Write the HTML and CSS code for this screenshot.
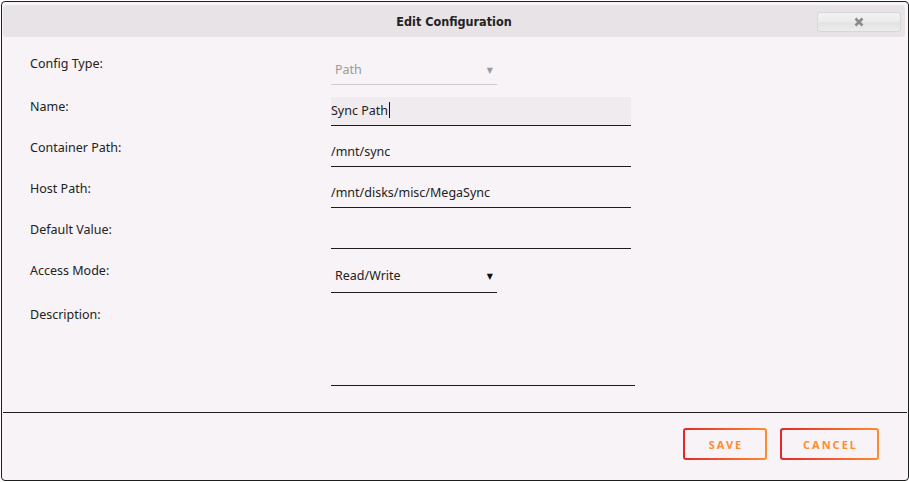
FILE: index.html
```html
<!DOCTYPE html>
<html lang="en">
<head>
    <meta charset="UTF-8">
    <meta name="viewport" content="width=device-width, initial-scale=1.0">
    <title>Edit Configuration</title>
    <link rel="stylesheet" href="styles.css">
</head>
<body>
    <div class="dialog">
        <header class="titlebar">
            <span></span>
            <h1 class="title">Edit Configuration</h1>
            <button type="button" class="close-button" aria-label="Close">
                <svg viewBox="0 0 10 10" xmlns="http://www.w3.org/2000/svg">
                    <path d="M1.5 1.5l7 7M8.5 1.5l-7 7"/>
                </svg>
            </button>
        </header>
        <form class="config-form">
            <div class="row">
                <label>Config Type:</label>
                <div class="select select-disabled">
                    <span>Path</span>
                    <span class="arrow">&#9660;</span>
                </div>
            </div>
            <div class="row">
                <label>Name:</label>
                <div class="field field-active">Sync Path<span class="caret"></span></div>
            </div>
            <div class="row">
                <label>Container Path:</label>
                <div class="field">/mnt/sync</div>
            </div>
            <div class="row">
                <label>Host Path:</label>
                <div class="field">/mnt/disks/misc/MegaSync</div>
            </div>
            <div class="row">
                <label>Default Value:</label>
                <div class="field"></div>
            </div>
            <div class="row">
                <label>Access Mode:</label>
                <div class="select select-tall">
                    <span>Read/Write</span>
                    <span class="arrow">&#9660;</span>
                </div>
            </div>
            <div class="row">
                <label>Description:</label>
                <div class="textarea"></div>
            </div>
        </form>
        <div class="footer">
            <button type="button" class="action-button">Save</button>
            <button type="button" class="action-button">Cancel</button>
        </div>
    </div>
</body>
</html>
```

FILE: styles.css
```css
body {
    margin: 0;
    background-color: #ffffff;
    font-family: 'Noto Sans', 'DejaVu Sans', sans-serif;
    color: #222;
}

.dialog {
    display: flex;
    flex-direction: column;
    width: 908px;
    height: 480px;
    box-sizing: border-box;
    margin: 1px 0 0 1px;
    border: 1px solid #1f1f1f;
    border-radius: 4px;
    background-color: #f7f3f6;
}

.titlebar {
    display: grid;
    grid-template-columns: 1fr auto 1fr;
    align-items: center;
    height: 32px;
    margin: 3px 3px 0 1px;
    background-color: #e8e3e6;
    border-radius: 4px;
}

.title {
    margin: 0;
    font-family: 'DejaVu Sans Condensed', 'DejaVu Sans', sans-serif;
    font-size: 12.5px;
    font-weight: bold;
    color: #222;
}

.close-button {
    justify-self: end;
    margin-right: 4px;
    margin-top: 1px;
    width: 84px;
    height: 20px;
    padding: 0;
    display: flex;
    justify-content: center;
    align-items: center;
    border: 1px solid #d8d6d7;
    border-radius: 3px;
    background: linear-gradient(to bottom, #f2f2f2 0%, #ececec 45%, #e3e3e3 55%, #ececec 100%);
}
.close-button svg {
    width: 10px;
    height: 10px;
    fill: none;
    stroke: #8a8a8a;
    stroke-width: 2.6;
}

.config-form {
    display: flex;
    flex-direction: column;
    gap: 12px;
    padding: 19px 0 26px 28px;
}

.row {
    display: grid;
    grid-template-columns: 301px auto;
    align-items: start;
}

.row label {
    font-size: 12.5px;
    line-height: 16px;
    padding-top: 2px;
    color: #222;
}
.row:first-child label {
    padding-top: 0;
}

.field {
    display: flex;
    align-items: center;
    width: 300px;
    height: 29px;
    padding-bottom: 2px;
    box-sizing: border-box;
    border-bottom: 1px solid #1c1c1c;
    font-size: 12.5px;
}
.field-active {
    background-color: #efebee;
}
.caret {
    display: inline-block;
    width: 1px;
    height: 16px;
    margin-left: 1px;
    background-color: #111;
}

.select {
    display: flex;
    justify-content: space-between;
    align-items: center;
    width: 166px;
    height: 29px;
    padding: 0 4px 2px;
    box-sizing: border-box;
    border-bottom: 1px solid #1c1c1c;
    font-size: 12.5px;
}
.select .arrow {
    font-size: 8px;
    color: #111;
}
.select-disabled {
    color: #9a9a9a;
    border-bottom-color: #cfcccf;
}
.select-disabled .arrow {
    color: #9a9a9a;
}
.select-tall {
    height: 32px;
}

.textarea {
    width: 304px;
    height: 81px;
    box-sizing: border-box;
    border-bottom: 1px solid #1c1c1c;
}

.footer {
    display: flex;
    justify-content: flex-end;
    gap: 13px;
    margin: 0 1px;
    padding: 15px 28px 0 0;
    border-top: 1px solid #1f1f1f;
}

.action-button {
    min-width: 84px;
    height: 32px;
    padding: 0 19px 0 21px;
    border: 2px solid transparent;
    border-radius: 3px;
    background:
        linear-gradient(#f7f3f6, #f7f3f6) padding-box,
        linear-gradient(to right, #e22828, #ff8c2f) border-box;
    color: #ff8c2f;
    font-family: 'Noto Sans', sans-serif;
    font-size: 11px;
    font-weight: bold;
    letter-spacing: 2px;
    text-transform: uppercase;
}
```
